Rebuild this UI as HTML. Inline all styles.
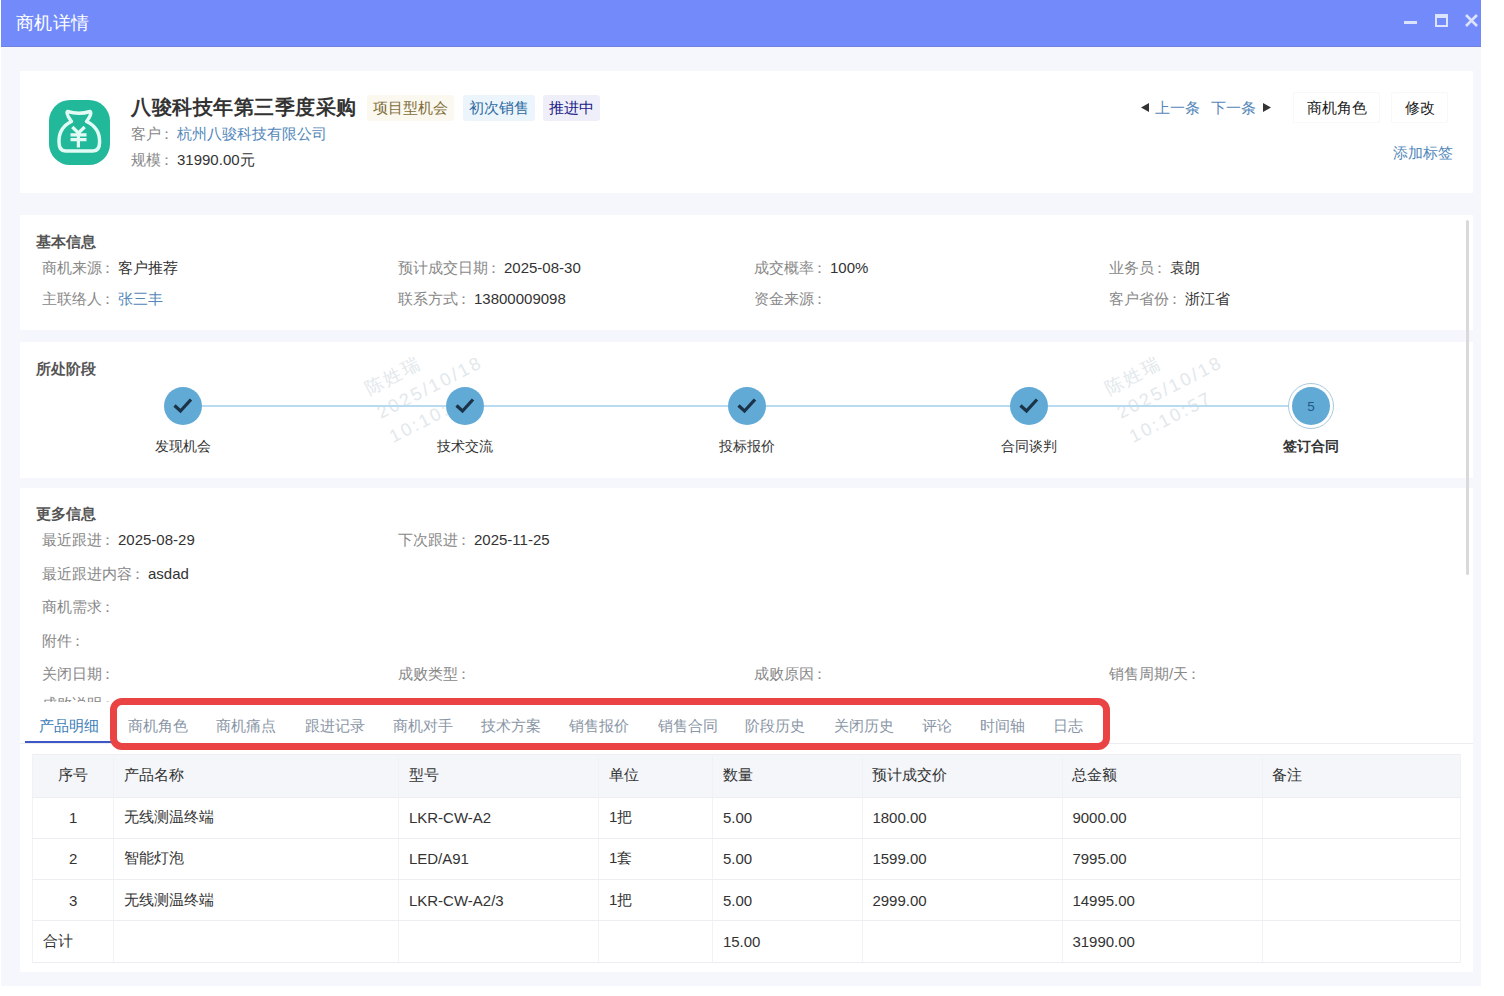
<!DOCTYPE html>
<html><head><meta charset="utf-8">
<style>
*{box-sizing:border-box;margin:0;padding:0}
html,body{width:1504px;height:996px;overflow:hidden;background:#fff;font-family:"Liberation Sans",sans-serif;font-size:15px;color:#333}
.abs{position:absolute}
#win{position:absolute;left:1px;top:0;width:1480px;height:986px;background:#f5f7fc;overflow:hidden}
#title{position:absolute;left:0;top:0;width:1480px;height:47px;background:#738bfa;border-bottom:1px solid #7082dc}
#title .t{position:absolute;left:15px;top:12px;font-size:18px;letter-spacing:0.4px;line-height:22px;color:#fff}
.card{position:absolute;left:19px;width:1453px;background:#fff}
.lbl{color:#888}
.c{display:inline-block;width:16px;font-style:normal;text-indent:-2px;overflow:visible}
.val{color:#333}
.link{color:#5387ba}
.sec{position:absolute;left:16px;font-size:15px;font-weight:bold;color:#555;line-height:18px}
.row{position:absolute;line-height:18px;white-space:nowrap}
.tag{position:absolute;top:24px;height:26px;line-height:26px;padding:0 6px;border-radius:3px;font-size:15px}
.btn{position:absolute;top:21px;height:31px;line-height:29px;border:1px solid #f8f8f8;border-radius:2px;color:#222;text-align:center;font-size:15px}
.step{position:absolute;top:45px;width:38px;height:38px;border-radius:50%;background:#62aad6}
.slbl{position:absolute;top:96px;font-size:14px;line-height:17px;color:#333;width:120px;text-align:center}
.tab{position:absolute;top:14.5px;font-size:15px;line-height:18px;color:#8a96a6;white-space:nowrap}
table{position:absolute;left:12px;top:9px;border-collapse:collapse;table-layout:fixed;width:1428px}
td,th{border:1px solid #f1f2f6;border-top-color:#eceef2;border-bottom-color:#eceef2;font-weight:normal;text-align:left;padding:0 0 0 9.5px;font-size:15px;color:#333;height:41.3px}
th{background:#f4f6fa;height:42.5px}

.wm{position:absolute;color:#e2e8ec;font-size:18px;line-height:27px;letter-spacing:2.6px;transform-origin:0 0;transform:rotate(-27deg);white-space:nowrap}
</style></head>
<body>
<div id="win">
  <div id="title"><div class="t">商机详情</div>
    <div class="abs" style="left:1403px;top:21px;width:13px;height:3px;background:#dce3ff"></div>
    <div class="abs" style="left:1434px;top:14px;width:13px;height:13px;border:2px solid #dce3ff;border-top-width:4px"></div>
    <svg class="abs" style="left:1464px;top:14px" width="13" height="13" viewBox="0 0 13 13"><path d="M1 1L12 12M12 1L1 12" stroke="#dce3ff" stroke-width="2.6"/></svg>
  </div>

  <!-- header card -->
  <div class="card" style="top:71px;height:122px">
    <svg class="abs" style="left:29px;top:29px" width="61" height="65" viewBox="0 0 61 65">
      <rect x="0" y="0" width="61" height="65" rx="21" fill="#22b89a"/>
      <path d="M22.5 21.5 C19.5 17.5 16.5 13 18.5 11.5 Q30 15 41 11.5 C43 13 40.5 17.5 37.5 21.5 C46 25.5 50.8 33 50.6 42 Q50.6 51 44 51 L16.5 51 Q10 51 10 42 C9.8 33 14 25.5 22.5 21.5Z" fill="none" stroke="#e2fbf4" stroke-width="3.5" stroke-linejoin="round"/>
      <path d="M23.3 27 L29.4 33 L35.7 27 M29.4 33 V47.6 M21.5 34.8 H37.5 M21.5 39.7 H37.5" fill="none" stroke="#e2fbf4" stroke-width="3.2"/>
    </svg>
    <div class="row" style="left:111px;top:24px;font-size:20px;letter-spacing:0.5px;line-height:24px;font-weight:bold;color:#333">八骏科技年第三季度采购</div>
    <div class="tag" style="left:347px;background:#fbf8ef;color:#7f6d3a">项目型机会</div>
    <div class="tag" style="left:443px;background:#edf5fc;color:#2b6a9f">初次销售</div>
    <div class="tag" style="left:523px;background:#efeff9;color:#202088">推进中</div>
    <div class="row" style="left:111px;top:54px"><span class="lbl">客户<i class="c">：</i></span><span class="link">杭州八骏科技有限公司</span></div>
    <div class="row" style="left:111px;top:80px"><span class="lbl">规模<i class="c">：</i></span><span class="val">31990.00元</span></div>

    <svg class="abs" style="left:1121px;top:32px" width="8" height="9"><path d="M0 4.5L8 0V9Z" fill="#333"/></svg>
    <div class="row link" style="left:1135px;top:28px">上一条</div>
    <div class="row link" style="left:1191px;top:28px">下一条</div>
    <svg class="abs" style="left:1243px;top:32px" width="8" height="9"><path d="M8 4.5L0 0V9Z" fill="#333"/></svg>
    <div class="btn" style="left:1273px;width:87px">商机角色</div>
    <div class="btn" style="left:1371px;width:57px">修改</div>
    <div class="row link" style="left:1373px;top:73px">添加标签</div>
  </div>

  <!-- basic info -->
  <div class="card" style="top:215px;height:115px">
    <div class="sec" style="top:18px">基本信息</div>
    <div class="row" style="left:22px;top:44px"><span class="lbl">商机来源<i class="c">：</i></span><span class="val">客户推荐</span></div>
    <div class="row" style="left:378px;top:44px"><span class="lbl">预计成交日期<i class="c">：</i></span><span class="val">2025-08-30</span></div>
    <div class="row" style="left:734px;top:44px"><span class="lbl">成交概率<i class="c">：</i></span><span class="val">100%</span></div>
    <div class="row" style="left:1089px;top:44px"><span class="lbl">业务员<i class="c">：</i></span><span class="val">袁朗</span></div>
    <div class="row" style="left:22px;top:75px"><span class="lbl">主联络人<i class="c">：</i></span><span class="link">张三丰</span></div>
    <div class="row" style="left:378px;top:75px"><span class="lbl">联系方式<i class="c">：</i></span><span class="val">13800009098</span></div>
    <div class="row" style="left:734px;top:75px"><span class="lbl">资金来源<i class="c">：</i></span></div>
    <div class="row" style="left:1089px;top:75px"><span class="lbl">客户省份<i class="c">：</i></span><span class="val">浙江省</span></div>
  </div>

  <!-- stage -->
  <div class="card" style="top:342px;height:136px">
    <div class="sec" style="top:18px">所处阶段</div>
    <div class="wm" style="left:340px;top:36px">陈姓瑞<br>2025/10/18<br>10:10:57</div>
<div class="wm" style="left:1080px;top:36px">陈姓瑞<br>2025/10/18<br>10:10:57</div>
<div class="abs" style="left:182px;top:63px;width:1110px;height:2px;background:#b9dbef"></div>
<div class="step" style="left:144px"><svg width="38" height="38" viewBox="0 0 38 38"><path d="M10.5 18.5L16.5 24L27 12.5" fill="none" stroke="#1b3348" stroke-width="3.3"/></svg></div>
<div class="slbl" style="left:103px">发现机会</div>
<div class="step" style="left:426px"><svg width="38" height="38" viewBox="0 0 38 38"><path d="M10.5 18.5L16.5 24L27 12.5" fill="none" stroke="#1b3348" stroke-width="3.3"/></svg></div>
<div class="slbl" style="left:385px">技术交流</div>
<div class="step" style="left:708px"><svg width="38" height="38" viewBox="0 0 38 38"><path d="M10.5 18.5L16.5 24L27 12.5" fill="none" stroke="#1b3348" stroke-width="3.3"/></svg></div>
<div class="slbl" style="left:667px">投标报价</div>
<div class="step" style="left:990px"><svg width="38" height="38" viewBox="0 0 38 38"><path d="M10.5 18.5L16.5 24L27 12.5" fill="none" stroke="#1b3348" stroke-width="3.3"/></svg></div>
<div class="slbl" style="left:949px">合同谈判</div>
<div class="abs" style="left:1268px;top:41px;width:46px;height:46px;border-radius:50%;border:1px solid #a9c9dc;background:#fff"></div><div class="step" style="left:1272px;text-align:center;line-height:40px;font-size:13.5px;color:#1d5a85">5</div>
<div class="slbl" style="left:1231px;font-weight:bold">签订合同</div>
  </div>

  <!-- more info -->
  <div class="card" style="top:488px;height:214px;overflow:hidden">
    <div class="sec" style="top:17px">更多信息</div>
    <div class="row" style="left:22px;top:43px"><span class="lbl">最近跟进<i class="c">：</i></span><span class="val">2025-08-29</span></div>
    <div class="row" style="left:378px;top:43px"><span class="lbl">下次跟进<i class="c">：</i></span><span class="val">2025-11-25</span></div>
    <div class="row" style="left:22px;top:76.5px"><span class="lbl">最近跟进内容<i class="c">：</i></span><span class="val">asdad</span></div>
    <div class="row" style="left:22px;top:110px"><span class="lbl">商机需求<i class="c">：</i></span></div>
    <div class="row" style="left:22px;top:143.5px"><span class="lbl">附件<i class="c">：</i></span></div>
    <div class="row" style="left:22px;top:177px"><span class="lbl">关闭日期<i class="c">：</i></span></div>
    <div class="row" style="left:378px;top:177px"><span class="lbl">成败类型<i class="c">：</i></span></div>
    <div class="row" style="left:734px;top:177px"><span class="lbl">成败原因<i class="c">：</i></span></div>
    <div class="row" style="left:1089px;top:177px"><span class="lbl">销售周期/天<i class="c">：</i></span></div>
    <div class="row" style="left:22px;top:207px"><span class="lbl">成败说明<i class="c">：</i></span></div>
  </div>

  <!-- tabs + table -->
  <div class="card" style="top:702px;height:270px">
<div class="tab" style="left:19px;color:#3c7db8">产品明细</div>
<div class="abs" style="left:5px;top:39px;width:86px;height:2px;background:#3d58c6"></div>
<div class="abs" style="left:0;top:41px;width:1453px;height:1px;background:#ebedf0"></div>
<div class="tab" style="left:108.3px">商机角色</div>
<div class="tab" style="left:196.4px">商机痛点</div>
<div class="tab" style="left:284.5px">跟进记录</div>
<div class="tab" style="left:372.6px">商机对手</div>
<div class="tab" style="left:461.3px">技术方案</div>
<div class="tab" style="left:549.3px">销售报价</div>
<div class="tab" style="left:637.5px">销售合同</div>
<div class="tab" style="left:725.4px">阶段历史</div>
<div class="tab" style="left:813.6px">关闭历史</div>
<div class="tab" style="left:901.9px">评论</div>
<div class="tab" style="left:959.6px">时间轴</div>
<div class="tab" style="left:1033.3px">日志</div>
<table style="top:52px"><colgroup><col style="width:81.4px"><col style="width:285px"><col style="width:200px"><col style="width:114px"><col style="width:149.5px"><col style="width:200px"><col style="width:200px"><col style="width:198.5px"></colgroup><tr><th style="text-align:center;padding:0">序号</th><th>产品名称</th><th>型号</th><th>单位</th><th>数量</th><th>预计成交价</th><th>总金额</th><th>备注</th></tr><tr><td style="text-align:center;padding:0">1</td><td>无线测温终端</td><td>LKR-CW-A2</td><td>1把</td><td>5.00</td><td>1800.00</td><td>9000.00</td><td></td></tr><tr><td style="text-align:center;padding:0">2</td><td>智能灯泡</td><td>LED/A91</td><td>1套</td><td>5.00</td><td>1599.00</td><td>7995.00</td><td></td></tr><tr><td style="text-align:center;padding:0">3</td><td>无线测温终端</td><td>LKR-CW-A2/3</td><td>1把</td><td>5.00</td><td>2999.00</td><td>14995.00</td><td></td></tr><tr><td>合计</td><td></td><td></td><td></td><td>15.00</td><td></td><td>31990.00</td><td></td></tr></table>
  </div>

    <div class="abs" style="left:109px;top:698px;width:1000px;height:52px;border:7px solid #ea4343;border-radius:12px"></div>
  <div class="abs" style="left:1465px;top:220px;width:3px;height:355px;background:#d9d9d9;border-radius:2px"></div>
</div>
</body></html>
